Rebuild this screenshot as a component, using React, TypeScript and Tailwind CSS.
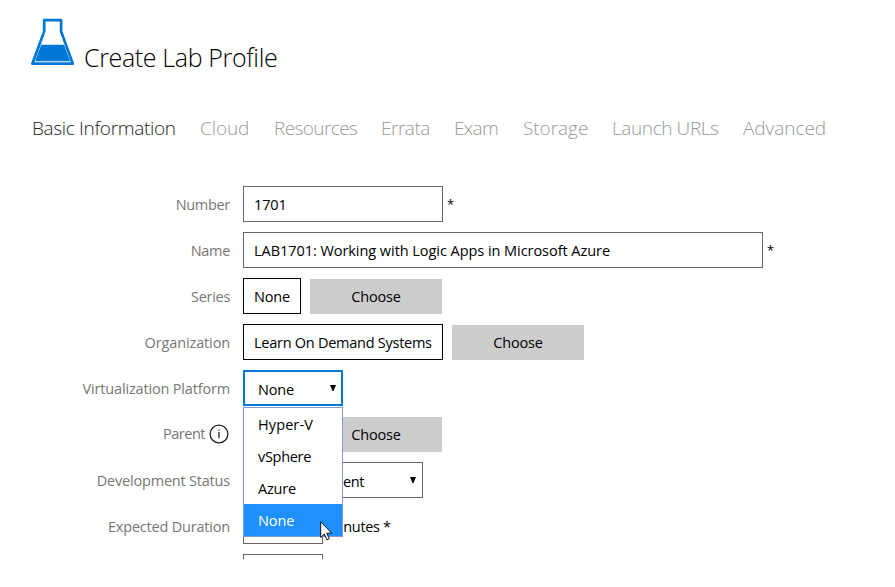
import type { ReactNode } from 'react';

function Flask() {
  return (
    <svg width="44" height="48" viewBox="0 0 44 48" className="block">
      <path d="M13.2 2.2H30.1v11.2L41.8 45.7H1.4L13.2 13.4z" fill="none" stroke="#0078d7" strokeWidth="2.7" strokeLinejoin="round" />
      <path d="M10.2 26.8h22.9l6 16.4H4.1z" fill="#0078d7" />
    </svg>
  );
}

function Row({ label, track = 'tracking-[-0.3px]', children }: { label: ReactNode; track?: string; children: ReactNode }) {
  return (
    <div className="flex h-9 items-center">
      <div className={`flex w-[230px] items-center justify-end pt-[2px] text-[#777] ${track}`}>{label}</div>
      <div className="ml-[13px] flex h-9 items-center text-black">{children}</div>
    </div>
  );
}

function Choose() {
  return (
    <button className="mt-px ml-[9px] h-[35px] w-[132px] bg-[#ccc] text-center leading-[35px] tracking-[-0.2px]">Choose</button>
  );
}

function Arrow() {
  return (
    <svg width="6" height="6" viewBox="0 0 6 6" className="block">
      <path d="M0 0h6L3.5 6h-1z" fill="#000" />
    </svg>
  );
}

function Option({ track = '', children }: { track?: string; children: ReactNode }) {
  return <div className={`h-8 pl-[14px] leading-[33px] ${track}`}>{children}</div>;
}

export default function App() {
  return (
    <div className="h-[587px] w-[895px] overflow-hidden bg-white font-['Open_Sans',sans-serif] text-[14.5px] tracking-[-0.3px] whitespace-nowrap">
      <header className="flex h-[66px] pt-[18px] pl-[31px]">
        <Flask />
        <h1 className="mt-[21px] ml-[9px] text-[25px] leading-[36px] font-light tracking-[-0.36px]">Create Lab Profile</h1>
      </header>
      <nav className="mt-[46px] flex h-8 pl-8 text-[19px] leading-8 font-light text-[#999]">
        <span className="w-[168px] tracking-[-0.33px] text-[#222]">Basic Information</span>
        <span className="w-[74px] tracking-[-0.1px]">Cloud</span>
        <span className="w-[107px] tracking-[-0.6px]">Resources</span>
        <span className="w-[73px] tracking-[-0.47px]">Errata</span>
        <span className="w-[69px] tracking-[-0.7px]">Exam</span>
        <span className="w-[89px] tracking-[-0.05px]">Storage</span>
        <span className="w-[131px] tracking-[-0.4px]">Launch URLs</span>
        <span className="tracking-[-0.05px]">Advanced</span>
      </nav>
      <main className="mt-[42px] flex h-[373px] flex-col gap-[10px] overflow-hidden">
        <Row label="Number">
          <div className="h-9 w-[200px] border border-[#666] pl-[10px] leading-[35px] tracking-[-0.15px]">1701</div>
          <span className="mt-[2px] ml-1 text-[13px]">*</span>
        </Row>
        <Row label="Name">
          <div className="h-9 w-[520px] border border-[#666] pl-[10px] leading-[35px] tracking-[-0.05px]">LAB1701: Working with Logic Apps in Microsoft Azure</div>
          <span className="mt-[2px] ml-1 text-[13px]">*</span>
        </Row>
        <Row label="Series">
          <div className="h-9 w-[58px] border border-black pl-[10px] leading-[35px] tracking-[-0.15px]">None</div>
          <Choose />
        </Row>
        <Row label="Organization" track="tracking-[-0.13px]">
          <div className="h-9 w-[200px] border border-black pl-[10px] leading-[35px] tracking-[-0.26px]">Learn On Demand Systems</div>
          <Choose />
        </Row>
        <Row label="Virtualization Platform" track="tracking-[-0.17px]">
          <div className="relative flex h-9 w-[100px] items-center justify-between border-2 border-[#0078d7] pr-[5px] pl-[13px]">
            <span className="pt-[3px] tracking-[-0.15px]">None</span>
            <Arrow />
            <div className="absolute top-[35px] -left-[2px] z-10 h-[130px] w-[100px] border border-[#7b9ad8] bg-white">
              <Option track="tracking-[0.1px]">Hyper-V</Option>
              <Option>vSphere</Option>
              <Option track="tracking-[-0.2px]">Azure</Option>
              <div className="h-8 bg-[#1e90ff] pl-[14px] leading-[33px] tracking-[-0.1px] text-white">None</div>
              <svg width="13" height="20" viewBox="0 0 13 20" className="absolute top-[113px] left-[76px]">
                <path d="M.7.8v15.7l3.6-3.4 2.5 5.7 2.5-1.1-2.5-5.5h5z" fill="#fff" stroke="#111" strokeWidth="1" />
              </svg>
            </div>
          </div>
        </Row>
        <Row
          track="tracking-[-0.5px]"
          label={
            <>
              <span className="-mt-[2px]">Parent</span>
              <svg width="20" height="20" viewBox="0 0 20 20" className="-mt-[3px] mr-px ml-1 block">
                <circle cx="10" cy="10" r="8.9" fill="none" stroke="#222" strokeWidth="1.3" />
                <path d="M10 8v6.2M10 5.4v1.4" stroke="#222" strokeWidth="1.3" />
              </svg>
            </>
          }
        >
          <div className="w-[58px]" />
          <Choose />
        </Row>
        <Row label="Development Status" track="tracking-[-0.2px]">
          <div className="flex h-9 w-[180px] items-center justify-between border border-[#666] pr-[6px] pl-[99px]">
            <span className="pt-[3px] tracking-[-0.45px]">ent</span>
            <Arrow />
          </div>
        </Row>
        <Row label="Expected Duration" track="tracking-[-0.2px]">
          <div className="h-9 w-20 border border-[#666]" />
          <span className="mt-[2px] ml-[17px] tracking-[-0.35px]">inutes *</span>
        </Row>
        <Row label="">
          <div className="h-9 w-20 border border-[#666]" />
        </Row>
      </main>
    </div>
  );
}
